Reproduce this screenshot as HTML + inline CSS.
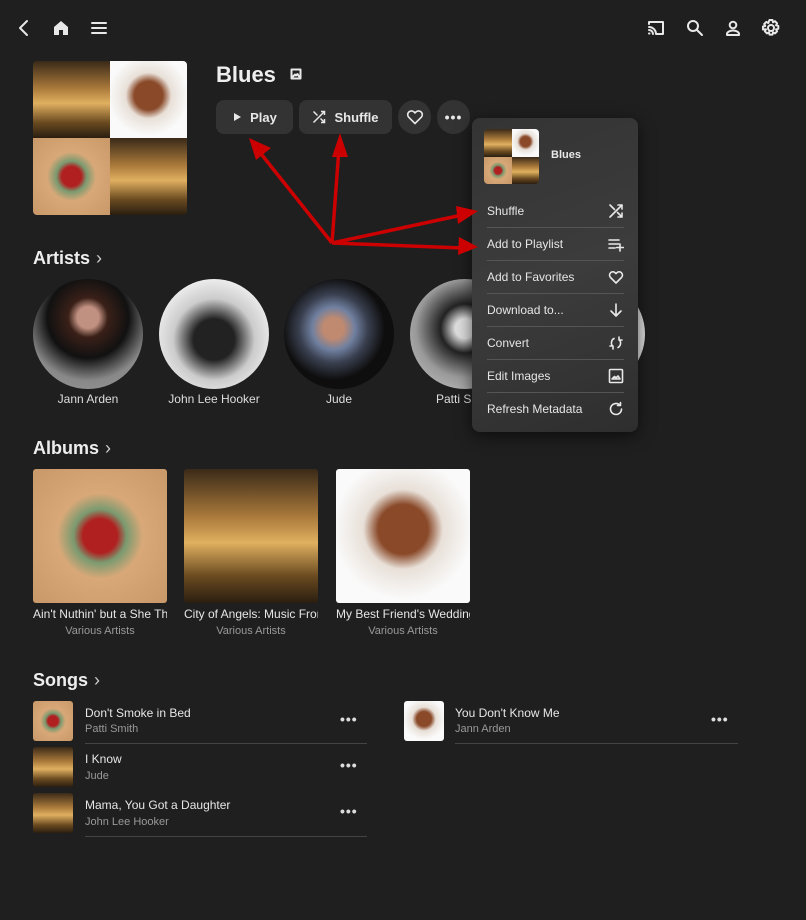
<!DOCTYPE html>
<html><head><meta charset="utf-8"><style>
*{margin:0;padding:0;box-sizing:border-box}
body{width:806px;height:920px;background:#1f1f1f;color:#e8e8e8;font-family:"Liberation Sans",sans-serif;position:relative;overflow:hidden}
.a{position:absolute}
.ico{position:absolute;fill:none;stroke:#e8e8e8;stroke-width:2;stroke-linecap:round;stroke-linejoin:round}
h2{position:absolute;font-size:18px;font-weight:bold;color:#eee}
h2 span{font-weight:normal;color:#ccc;margin-left:6px}
.btn{position:absolute;top:100px;height:34px;background:#333;border-radius:8px;font-size:13px;font-weight:bold;display:flex;align-items:center;justify-content:center;gap:8px}
.circ{position:absolute;top:279px;width:110px;height:110px;border-radius:50%}
.nm{position:absolute;top:392px;width:126px;text-align:center;font-size:12px;color:#ddd}
.alb{position:absolute;top:469px;width:134px;height:134px;border-radius:3px}
.at{position:absolute;top:607px;font-size:12px;width:134px;white-space:nowrap;overflow:hidden;color:#e6e6e6}
.as{position:absolute;top:625px;font-size:11px;width:134px;text-align:center;color:#999}
.th{position:absolute;width:40px;height:40px;border-radius:3px}
.st{position:absolute;font-size:12px;color:#e6e6e6}
.ss{position:absolute;font-size:11px;color:#999}
.ln{position:absolute;height:1px;background:#444}
.dots{position:absolute;font-size:14px;font-weight:bold;letter-spacing:1px;color:#ddd}
.coa{background:linear-gradient(180deg,#3a2a18 0%,#a8783a 35%,#e0b060 55%,#6a4a20 80%,#2a1e10 100%)}
.mbf{background:radial-gradient(circle at 50% 45%,#8a4a2a 0 25%,#e8e0d8 40%,#fafafa 70%)}
.ain{background:radial-gradient(circle at 50% 50%,#b02020 0 18%,#7a9a70 28%,#d8a878 45%,#c89868 100%)}
.menu{position:absolute;left:472px;top:118px;width:166px;height:314px;background:linear-gradient(160deg,#343434,#3c3c3c 50%,#2e2e2e);border-radius:8px;box-shadow:0 4px 16px rgba(0,0,0,.6)}
.mi{position:absolute;left:15px;width:137px;height:33px;font-size:12px;color:#e6e6e6;line-height:33px;border-bottom:1px solid #555}
.mi svg{position:absolute;right:0;top:8px;fill:none;stroke:#e8e8e8;stroke-width:1.6;stroke-linecap:round;stroke-linejoin:round}
</style></head><body>

<!-- top bar -->
<svg class="ico" style="left:14px;top:18px" width="20" height="20" viewBox="0 0 20 20"><path d="M13 3 6 10l7 7"/></svg>
<svg class="a" style="left:52px;top:19px" width="18" height="18" viewBox="0 0 18 18"><path d="M2 8 9 2l7 6v8h-5v-5H7v5H2z" fill="#e8e8e8"/></svg>
<svg class="ico" style="left:90px;top:19px" width="18" height="18" viewBox="0 0 18 18"><path d="M2 4h14M2 9h14M2 14h14"/></svg>
<svg class="ico" style="left:646px;top:18px" width="20" height="20" viewBox="0 0 20 20" stroke-width="1.6"><path d="M3 6V4h14v12h-6M3 9a7 7 0 0 1 7 7M3 12a4 4 0 0 1 4 4M3 15.5h.5"/></svg>
<svg class="ico" style="left:685px;top:18px" width="20" height="20" viewBox="0 0 20 20"><circle cx="8" cy="8" r="5"/><path d="m12 12 5 5"/></svg>
<svg class="ico" style="left:723px;top:18px" width="20" height="20" viewBox="0 0 20 20" stroke-width="1.8"><circle cx="10" cy="7" r="3.3"/><path d="M4 17v-1c0-2 3-3.5 6-3.5s6 1.5 6 3.5v1z"/></svg>
<svg class="ico" style="left:761px;top:18px" width="20" height="20" viewBox="0 0 20 20" stroke-width="1.8"><circle cx="10" cy="10" r="3"/><path d="M8.5 2h3l.5 2.3 2-1.1 2.1 2.1-1.1 2 2.3.5v3l-2.3.5 1.1 2-2.1 2.1-2-1.1-.5 2.3h-3l-.5-2.3-2 1.1-2.1-2.1 1.1-2L2 11.5v-3l2.3-.5-1.1-2 2.1-2.1 2 1.1z"/></svg>

<!-- cover -->
<div class="a" style="left:33px;top:61px;width:154px;height:154px;border-radius:4px;overflow:hidden">
<div class="a coa" style="left:0;top:0;width:77px;height:77px"></div>
<div class="a mbf" style="left:77px;top:0;width:77px;height:77px"></div>
<div class="a ain" style="left:0;top:77px;width:77px;height:77px"></div>
<div class="a coa" style="left:77px;top:77px;width:77px;height:77px"></div>
</div>
<div class="a" style="left:216px;top:62px;font-size:22px;font-weight:bold;color:#eee">Blues</div>
<svg class="ico" style="left:290px;top:68px" width="12" height="12" viewBox="0 0 12 12" stroke-width="1.3"><rect x="1.5" y="1.5" width="9" height="9"/><path d="M3 8.5l2-2 1 1 1.5-1.5L9 8.5" /></svg>

<div class="btn" style="left:216px;width:77px"><svg width="10" height="10" viewBox="0 0 10 10"><path d="M2 1l7 4-7 4z" fill="#e8e8e8"/></svg>Play</div>
<div class="btn" style="left:299px;width:93px"><svg width="14" height="14" viewBox="0 0 14 14" fill="none" stroke="#e8e8e8" stroke-width="1.5"><path d="M9 1.5h3.5V5M12.5 1.5 1.5 12.5M9 12.5h3.5V9M8.5 8.5l4 4M1.5 1.5l4 4"/></svg>Shuffle</div>
<div class="btn" style="left:398px;width:33px;border-radius:17px"><svg width="18" height="18" viewBox="0 0 18 18" fill="none" stroke="#e8e8e8" stroke-width="1.6"><path d="M9 15.5 2.8 9.3a3.7 3.7 0 0 1 5.3-5.3L9 4.9l.9-.9a3.7 3.7 0 0 1 5.3 5.3z"/></svg></div>
<div class="btn" style="left:437px;width:33px;border-radius:17px;font-size:14px;letter-spacing:1px">•••</div>

<!-- artists -->
<h2 style="left:33px;top:248px">Artists<span>›</span></h2>
<div class="circ" style="left:33px;background:radial-gradient(circle at 50% 35%,#c09080 0 12%,#3a2018 22%,#111 45%,#888 70%,#9a9a9a)"></div>
<div class="circ" style="left:159px;background:radial-gradient(circle at 50% 55%,#222 0 25%,#ccc 50%,#eee 75%,#bbb)"></div>
<div class="circ" style="left:284px;background:radial-gradient(circle at 45% 45%,#c08a70 0 12%,#7080a0 25%,#3a4050 40%,#0e0e0e 60%)"></div>
<div class="circ" style="left:410px;background:radial-gradient(circle at 50% 45%,#ddd 0 12%,#222 30%,#999 60%,#ccc)"></div>
<div class="circ" style="left:535px;background:#ddd"></div>
<div class="nm" style="left:25px">Jann Arden</div>
<div class="nm" style="left:151px">John Lee Hooker</div>
<div class="nm" style="left:276px">Jude</div>
<div class="nm" style="left:402px">Patti Smith</div>

<!-- albums -->
<h2 style="left:33px;top:438px">Albums<span>›</span></h2>
<div class="alb ain" style="left:33px"></div>
<div class="alb coa" style="left:184px"></div>
<div class="alb mbf" style="left:336px"></div>
<div class="at" style="left:33px">Ain't Nuthin' but a She Thing</div>
<div class="at" style="left:184px">City of Angels: Music From</div>
<div class="at" style="left:336px">My Best Friend's Wedding</div>
<div class="as" style="left:33px">Various Artists</div>
<div class="as" style="left:184px">Various Artists</div>
<div class="as" style="left:336px">Various Artists</div>

<!-- songs -->
<h2 style="left:33px;top:670px">Songs<span>›</span></h2>
<div class="th ain" style="left:33px;top:701px"></div>
<div class="st" style="left:85px;top:706px">Don't Smoke in Bed</div>
<div class="ss" style="left:85px;top:723px">Patti Smith</div>
<div class="dots" style="left:340px;top:711px">•••</div>
<div class="ln" style="left:85px;top:743px;width:282px"></div>
<div class="th coa" style="left:33px;top:747px"></div>
<div class="st" style="left:85px;top:752px">I Know</div>
<div class="ss" style="left:85px;top:770px">Jude</div>
<div class="dots" style="left:340px;top:757px">•••</div>
<div class="th coa" style="left:33px;top:793px"></div>
<div class="st" style="left:85px;top:798px">Mama, You Got a Daughter</div>
<div class="ss" style="left:85px;top:816px">John Lee Hooker</div>
<div class="dots" style="left:340px;top:803px">•••</div>
<div class="ln" style="left:85px;top:836px;width:282px"></div>
<div class="th mbf" style="left:404px;top:701px"></div>
<div class="st" style="left:455px;top:706px">You Don't Know Me</div>
<div class="ss" style="left:455px;top:723px">Jann Arden</div>
<div class="dots" style="left:711px;top:711px">•••</div>
<div class="ln" style="left:455px;top:743px;width:283px"></div>

<!-- menu -->
<div class="menu">
<div class="a" style="left:12px;top:11px;width:55px;height:55px;border-radius:4px;overflow:hidden">
<div class="a coa" style="left:0;top:0;width:28px;height:28px"></div>
<div class="a mbf" style="left:28px;top:0;width:27px;height:28px"></div>
<div class="a ain" style="left:0;top:28px;width:28px;height:27px"></div>
<div class="a coa" style="left:28px;top:28px;width:27px;height:27px"></div>
</div>
<div class="a" style="left:79px;top:31px;font-size:11px;font-weight:bold">Blues</div>
<div class="mi" style="top:77px">Shuffle<svg width="16" height="16" viewBox="0 0 16 16"><path d="M10 2h4v4M14 2 2 14M10 14h4v-4M9.5 9.5 14 14M2 2l4.5 4.5"/></svg></div>
<div class="mi" style="top:110px">Add to Playlist<svg width="16" height="16" viewBox="0 0 16 16"><path d="M1 4h10M1 8h10M1 12h6M12 8v7M8.5 11.5h7"/></svg></div>
<div class="mi" style="top:143px">Add to Favorites<svg width="16" height="16" viewBox="0 0 16 16"><path d="M8 14 2.5 8.5a3.3 3.3 0 0 1 4.7-4.7L8 4.6l.8-.8a3.3 3.3 0 0 1 4.7 4.7z"/></svg></div>
<div class="mi" style="top:176px">Download to...<svg width="16" height="16" viewBox="0 0 16 16"><path d="M8 2v12M3 9l5 5 5-5"/></svg></div>
<div class="mi" style="top:209px">Convert<svg width="16" height="16" viewBox="0 0 16 16"><path d="M6 3.5a5 5 0 0 0-1 8M5 14v-3H2M10 12.5a5 5 0 0 0 1-8M11 2v3h3"/></svg></div>
<div class="mi" style="top:242px">Edit Images<svg width="16" height="16" viewBox="0 0 16 16"><rect x="1.5" y="1.5" width="13" height="13" rx="1"/><path d="M4 11l2.5-2.5 1.5 1.5 2-2 2 3z"/></svg></div>
<div class="mi" style="top:275px;border-bottom:none">Refresh Metadata<svg width="16" height="16" viewBox="0 0 16 16"><path d="M13.5 8a5.5 5.5 0 1 1-1.6-3.9M12.5 1.5v3h-3"/></svg></div>
</div>

<!-- arrows -->
<svg class="a" style="left:0;top:0" width="806" height="920">
<g stroke="#cc0000" stroke-width="3.5" fill="none"><path d="M332 243 258 150M332 243 339 148M332 243 462 215M332 243 462 248"/></g>
<g fill="#cc0000"><path d="M249 138l22 10-15 12z"/><path d="M340 133l8 24h-16z"/><path d="M478 211l-20 13-2-18z"/><path d="M478 247l-20 8 1-18z"/></g>
</svg>
</body></html>
